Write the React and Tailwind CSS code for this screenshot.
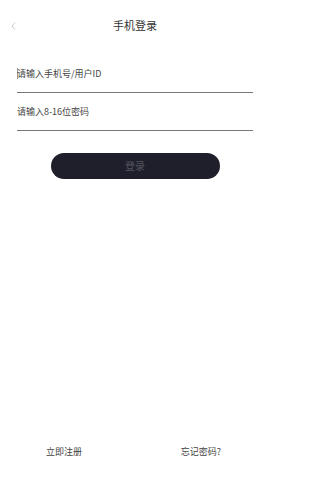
import React from "react";

export default function App() {
  return (
    <div
      className="w-[270px] h-[480px] bg-white flex flex-col"
      style={{ fontFamily: '"Noto Sans CJK SC", "Noto Sans", sans-serif' }}
    >
      <div className="h-[50px] relative flex items-center justify-center">
        <svg
          className="absolute left-[11px] top-[22px]"
          width="5"
          height="8"
          viewBox="0 0 5 8"
          fill="none"
        >
          <path d="M4 0.5 L1 4 L4 7.5" stroke="#c4c4c4" strokeWidth="0.9" />
        </svg>
        <span className="text-[11px] text-[#333] leading-none">手机登录</span>
      </div>
      <div className="pl-[17px] pr-[17px] pt-[5px]">
        <div className="h-[38px] border-b border-[#777] flex items-center">
          <span className="w-px h-[11px] bg-[#9a9a9a] mr-[-1px]"></span>
          <span className="text-[9px] text-[#444] leading-none">请输入手机号/用户ID</span>
        </div>
        <div className="h-[38px] border-b border-[#777] flex items-center">
          <span className="text-[9px] text-[#444] leading-none">请输入8-16位密码</span>
        </div>
      </div>
      <div className="flex justify-center mt-[22px]">
        <div className="w-[169px] h-[26px] rounded-full bg-[#1f1f2b] flex items-center justify-center">
          <span className="text-[10px] text-[#555560] leading-none">登录</span>
        </div>
      </div>
      <div className="flex-1"></div>
      <div className="flex justify-between pl-[46px] pr-[49px] pb-[24px]">
        <span className="text-[9px] text-[#444] leading-none">立即注册</span>
        <span className="text-[9px] text-[#444] leading-none">忘记密码?</span>
      </div>
    </div>
  );
}
